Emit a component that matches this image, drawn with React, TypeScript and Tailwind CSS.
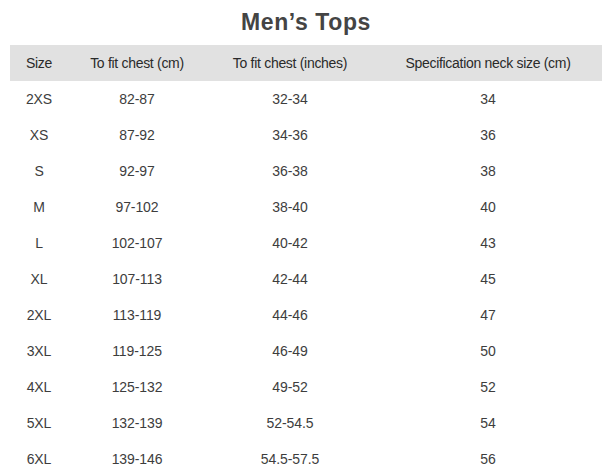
const rows = [
  ['2XS', '82-87', '32-34', '34'],
  ['XS', '87-92', '34-36', '36'],
  ['S', '92-97', '36-38', '38'],
  ['M', '97-102', '38-40', '40'],
  ['L', '102-107', '40-42', '43'],
  ['XL', '107-113', '42-44', '45'],
  ['2XL', '113-119', '44-46', '47'],
  ['3XL', '119-125', '46-49', '50'],
  ['4XL', '125-132', '49-52', '52'],
  ['5XL', '132-139', '52-54.5', '54'],
  ['6XL', '139-146', '54.5-57.5', '56'],
]

const cols = ['w-[58px]', 'w-[138px]', 'w-[168px]', 'flex-1']

export default function App() {
  return (
    <div className="w-[612px] h-[473px] overflow-hidden bg-white font-['Liberation_Sans',sans-serif] text-[#3d3d3d]">
      <h1 className="h-[45px] pt-[5px] text-center text-[23px] font-bold text-[#444] tracking-[0.6px]">
        Men’s Tops
      </h1>
      <div className="mx-[10px]">
        <div className="flex h-[36px] items-center bg-[#e1e1e1] text-[14px] tracking-[-0.3px] text-[#2a2a2a]">
          <div className={`${cols[0]} text-center`}>Size</div>
          <div className={`${cols[1]} text-center`}>To fit chest (cm)</div>
          <div className={`${cols[2]} text-center`}>To fit chest (inches)</div>
          <div className={`${cols[3]} text-center`}>Specification neck size (cm)</div>
        </div>
        {rows.map((r) => (
          <div key={r[0]} className="flex h-[36px] items-center text-[14px] tracking-[-0.1px]">
            {r.map((c, i) => (
              <div key={i} className={`${cols[i]} text-center`}>{c}</div>
            ))}
          </div>
        ))}
      </div>
    </div>
  )
}
